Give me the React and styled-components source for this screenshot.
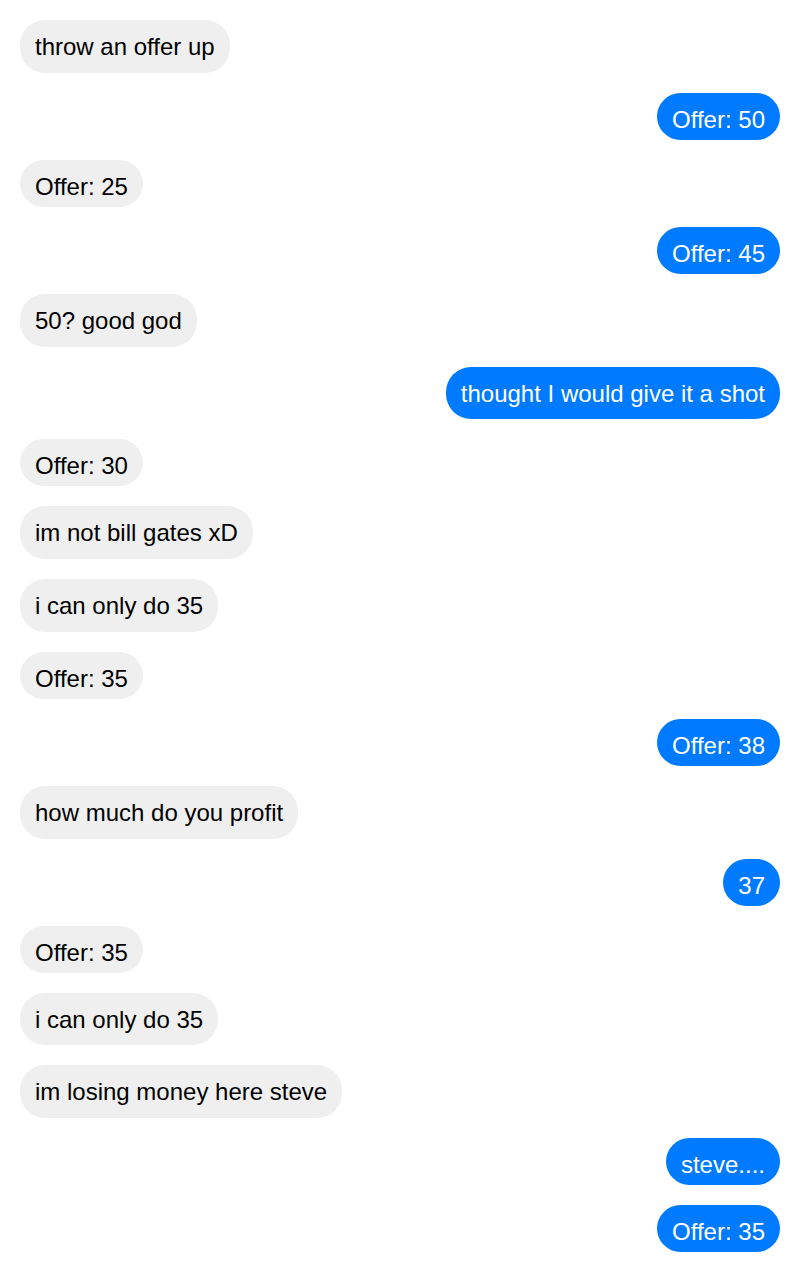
import React from 'react'
import styled, { createGlobalStyle } from 'styled-components'

const GlobalStyle = createGlobalStyle`
  html, body {
    margin: 0;
    padding: 0;
    background: #ffffff;
  }
  body {
    font-family: "Liberation Sans", Arial, sans-serif;
  }
`

const Thread = styled.div`
  display: flex;
  flex-direction: column;
  gap: 20px;
  padding: 20px;
  width: 800px;
  box-sizing: border-box;
`

const Row = styled.div`
  display: flex;
  justify-content: ${props => (props.$mine ? 'flex-end' : 'flex-start')};
`

const Bubble = styled.div`
  box-sizing: border-box;
  padding: 13px 15px ${props => (props.$tall ? '11.75px' : '6px')};
  font-size: 24px;
  line-height: 28px;
  white-space: nowrap;
  border-radius: 25px;
  background: ${props => (props.$mine ? '#007aff' : '#efefef')};
  color: ${props => (props.$mine ? '#ffffff' : '#000000')};
`

const mensagens = [
    { texto: 'throw an offer up', minha: false },
    { texto: 'Offer: 50', minha: true },
    { texto: 'Offer: 25', minha: false },
    { texto: 'Offer: 45', minha: true },
    { texto: '50? good god', minha: false },
    { texto: 'thought I would give it a shot', minha: true },
    { texto: 'Offer: 30', minha: false },
    { texto: 'im not bill gates xD', minha: false },
    { texto: 'i can only do 35', minha: false },
    { texto: 'Offer: 35', minha: false },
    { texto: 'Offer: 38', minha: true },
    { texto: 'how much do you profit', minha: false },
    { texto: '37', minha: true },
    { texto: 'Offer: 35', minha: false },
    { texto: 'i can only do 35', minha: false },
    { texto: 'im losing money here steve', minha: false },
    { texto: 'steve....', minha: true },
    { texto: 'Offer: 35', minha: true },
]

// bolhas com letras que descem abaixo da linha ficam mais altas
const temDescendente = (texto) => /[gjpqy]/.test(texto)

const App = () => {
    return (
        <>
            <GlobalStyle />
            <Thread>
                {mensagens.map((m, i) => (
                    <Row key={i} $mine={m.minha}>
                        <Bubble $mine={m.minha} $tall={temDescendente(m.texto)}>
                            {m.texto}
                        </Bubble>
                    </Row>
                ))}
            </Thread>
        </>
    )
}

export default App
